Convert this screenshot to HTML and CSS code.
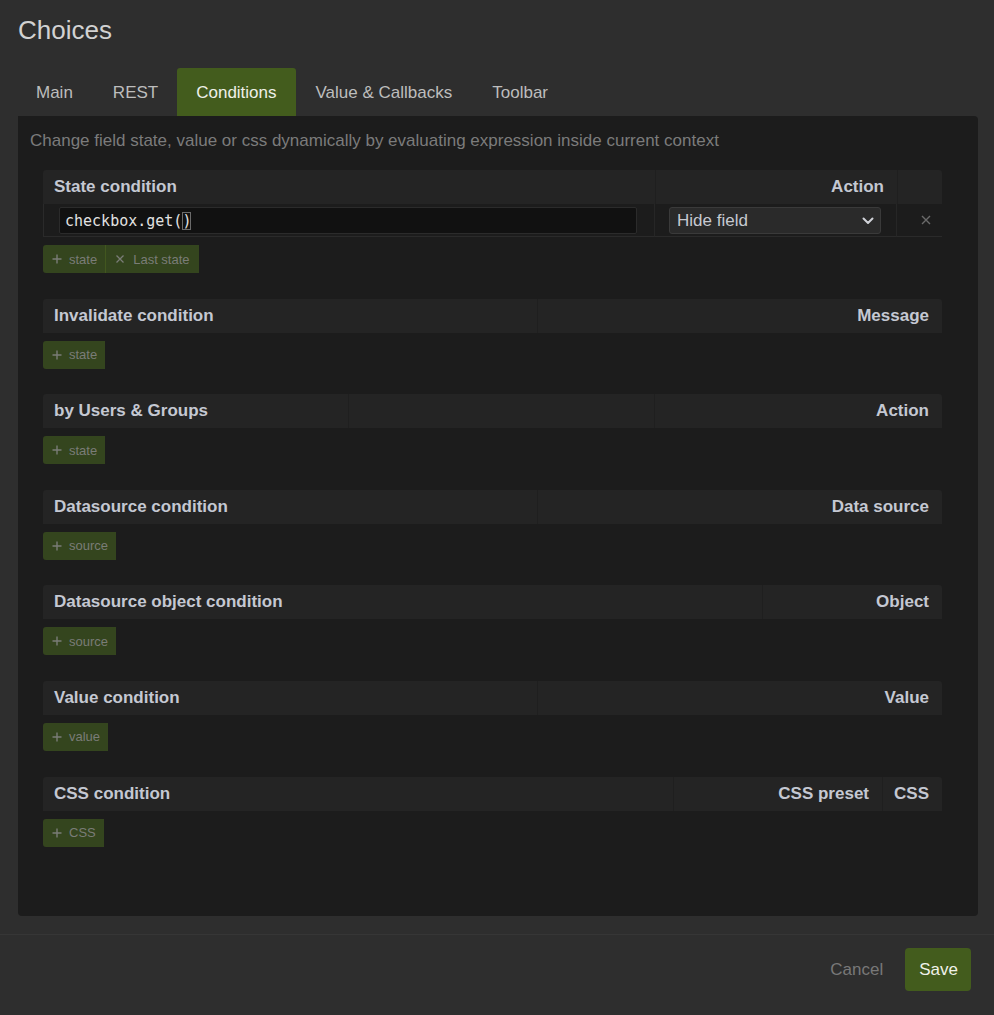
FILE: index.html
```html
<!DOCTYPE html>
<html>
<head>
<meta charset="utf-8">
<link rel="stylesheet" href="styles.css">
</head>
<body>
<div class="dialog">
  <h1 class="title">Choices</h1>
  <nav class="tabs">
    <span class="tab">Main</span>
    <span class="tab">REST</span>
    <span class="tab active">Conditions</span>
    <span class="tab">Value &amp; Callbacks</span>
    <span class="tab">Toolbar</span>
  </nav>
  <div class="panel">
    <p class="desc">Change field state, value or css dynamically by evaluating expression inside current context</p>

    <section class="cond">
      <div class="grid g-state">
        <div class="th">State condition</div>
        <div class="th right">Action</div>
        <div class="th"></div>
        <div class="td td-input"><div class="code">checkbox.get(<span class="match">)</span></div></div>
        <div class="td td-select">
          <div class="select"><span>Hide field</span>
            <svg class="chev" width="12" height="8" viewBox="0 0 12 8"><path d="M1.5 1.5 L6 6 L10.5 1.5" fill="none" stroke="#d0d2d8" stroke-width="2" stroke-linecap="round" stroke-linejoin="round"/></svg>
          </div>
        </div>
        <div class="td td-remove">
          <svg width="10" height="10" viewBox="0 0 10 10"><path d="M1 1 L9 9 M9 1 L1 9" stroke="#6a6a6a" stroke-width="1.4"/></svg>
        </div>
      </div>
      <div class="btns">
        <span class="btn"><svg class="ico" width="10" height="10" viewBox="0 0 10 10"><path d="M5 0.5 V9.5 M0.5 5 H9.5" stroke="#7a7c77" stroke-width="1.4"/></svg>state</span><span class="btn sep"><svg class="ico" width="10" height="10" viewBox="0 0 10 10"><path d="M1.5 1.5 L8.5 8.5 M8.5 1.5 L1.5 8.5" stroke="#7a7c77" stroke-width="1.3"/></svg>Last state</span>
      </div>
    </section>

    <section class="cond">
      <div class="grid g-half">
        <div class="th">Invalidate condition</div>
        <div class="th right">Message</div>
      </div>
      <div class="btns">
        <span class="btn"><svg class="ico" width="10" height="10" viewBox="0 0 10 10"><path d="M5 0.5 V9.5 M0.5 5 H9.5" stroke="#7a7c77" stroke-width="1.4"/></svg>state</span>
      </div>
    </section>

    <section class="cond">
      <div class="grid g-users">
        <div class="th">by Users &amp; Groups</div>
        <div class="th"></div>
        <div class="th right">Action</div>
      </div>
      <div class="btns">
        <span class="btn"><svg class="ico" width="10" height="10" viewBox="0 0 10 10"><path d="M5 0.5 V9.5 M0.5 5 H9.5" stroke="#7a7c77" stroke-width="1.4"/></svg>state</span>
      </div>
    </section>

    <section class="cond">
      <div class="grid g-half">
        <div class="th">Datasource condition</div>
        <div class="th right">Data source</div>
      </div>
      <div class="btns">
        <span class="btn"><svg class="ico" width="10" height="10" viewBox="0 0 10 10"><path d="M5 0.5 V9.5 M0.5 5 H9.5" stroke="#7a7c77" stroke-width="1.4"/></svg>source</span>
      </div>
    </section>

    <section class="cond">
      <div class="grid g-obj">
        <div class="th">Datasource object condition</div>
        <div class="th right">Object</div>
      </div>
      <div class="btns">
        <span class="btn"><svg class="ico" width="10" height="10" viewBox="0 0 10 10"><path d="M5 0.5 V9.5 M0.5 5 H9.5" stroke="#7a7c77" stroke-width="1.4"/></svg>source</span>
      </div>
    </section>

    <section class="cond">
      <div class="grid g-half">
        <div class="th">Value condition</div>
        <div class="th right">Value</div>
      </div>
      <div class="btns">
        <span class="btn"><svg class="ico" width="10" height="10" viewBox="0 0 10 10"><path d="M5 0.5 V9.5 M0.5 5 H9.5" stroke="#7a7c77" stroke-width="1.4"/></svg>value</span>
      </div>
    </section>

    <section class="cond">
      <div class="grid g-css">
        <div class="th">CSS condition</div>
        <div class="th right">CSS preset</div>
        <div class="th right">CSS</div>
      </div>
      <div class="btns">
        <span class="btn"><svg class="ico" width="10" height="10" viewBox="0 0 10 10"><path d="M5 0.5 V9.5 M0.5 5 H9.5" stroke="#7a7c77" stroke-width="1.4"/></svg>CSS</span>
      </div>
    </section>
  </div>
  <footer class="footer">
    <span class="cancel">Cancel</span>
    <span class="save">Save</span>
  </footer>
</div>
</body>
</html>
```

FILE: styles.css
```css
* { box-sizing: border-box; }
html, body { margin: 0; padding: 0; }
body {
  background: #2e2e2e;
  font-family: "Liberation Sans", Arial, Helvetica, sans-serif;
  color: #c6c9d1;
  width: 994px;
  height: 1015px;
  overflow: hidden;
}
.title {
  margin: 0;
  padding: 15px 0 0 18px;
  height: 68px;
  font-size: 26px;
  line-height: 30px;
  font-weight: normal;
  color: #d2d2d2;
}
.tabs {
  display: flex;
  padding-left: 18px;
  height: 48px;
}
.tab {
  padding: 0 19px 0 18px;
  line-height: 49px;
  font-size: 17px;
  color: #bdbdbd;
}
.tab:nth-child(2) { padding-left: 21px; }
.tab:nth-child(4) { padding-left: 20px; }
.tab:nth-child(5) { padding-left: 21px; }
.tab.active {
  background: #435c1d;
  color: #eef0e8;
  border-radius: 3px 3px 0 0;
  padding: 0 19px 0 19px;
}
.panel {
  margin: 0 16px 0 18px;
  height: 800px;
  background: #1c1c1c;
  border-radius: 0 4px 4px 4px;
  padding: 12px 12px 0 12px;
}
.desc {
  margin: 0 0 17px 0;
  font-size: 17px;
  line-height: 25px;
  color: #7b7b7b;
}
.cond {
  margin: 0 24px 25.6px 13px;
}
.grid { display: grid; }
.g-state { grid-template-columns: 612px 242px 45px; }
.g-half { grid-template-columns: 494px 405px; }
.g-users { grid-template-columns: 305px 306px 288px; }
.g-obj { grid-template-columns: 719px 180px; }
.g-css { grid-template-columns: 630px 209px 60px; }
.th {
  background: #242424;
  height: 34px;
  line-height: 34px;
  padding: 0 13px 0 11px;
  font-size: 17px;
  font-weight: bold;
  color: #c4c8d2;
  border-left: 1px solid #1f1f1f;
  white-space: nowrap;
}
.th:first-child { border-left: none; border-top-left-radius: 3px; }
.grid .th:nth-last-child(1) { border-top-right-radius: 3px; }
.g-state .th:nth-child(3) { border-top-right-radius: 3px; }
.th.right { text-align: right; }
.td {
  height: 33px;
  border-bottom: 1px solid #2a2a2a;
  border-right: 1px solid #262626;
  display: flex;
  align-items: center;
}
.td-input { border-left: 1px solid #2a2a2a; padding: 0 17px 0 15px; }
.code {
  width: 100%;
  height: 27px;
  background: #111111;
  border: 1px solid #2b2b2b;
  border-radius: 2px;
  padding-left: 5px;
  font-family: "DejaVu Sans Mono", monospace;
  font-size: 15px;
  line-height: 26px;
  color: #e2e2e2;
}
.match { outline: 1px solid #6a6a6a; outline-offset: -1px; }
.td-select { padding: 1px 15px 0 14px; border-right: 1px solid #262626; }
.select {
  width: 100%;
  height: 27px;
  background: #2a2a2a;
  border: 1px solid #3a3a3a;
  border-radius: 3px;
  display: flex;
  align-items: center;
  justify-content: space-between;
  padding: 1px 6px 0 7px;
  font-size: 17px;
  color: #c6c9d1;
}
.chev { display: block; }
.td-remove { justify-content: center; border-right: none; padding-left: 12px; }
.btns {
  display: flex;
  margin-top: 8px;
  height: 28px;
}
.btn {
  display: flex;
  align-items: center;
  background: #34451e;
  color: #7a7c77;
  font-size: 13px;
  height: 28px;
  padding: 0 8px 0 9px;
}
.btn:first-child { border-radius: 3px 0 0 3px; }
.btn.sep { border-left: 1px solid #42571f; padding-left: 9px; padding-right: 9px; }
.ico { margin-right: 7px; display: block; }
.sep .ico { margin-right: 8px; }
.footer {
  margin-top: 18px;
  border-top: 1px solid #363636;
  height: 81px;
  display: flex;
  justify-content: flex-end;
  align-items: center;
  padding: 0 23px 11px 0;
}
.cancel {
  font-size: 17px;
  color: #787878;
  margin-right: 22px;
}
.save {
  background: #435c1d;
  color: #f0f2ea;
  font-size: 17px;
  height: 43px;
  line-height: 43px;
  padding: 0 13px 0 14px;
  border-radius: 4px;
}
```
